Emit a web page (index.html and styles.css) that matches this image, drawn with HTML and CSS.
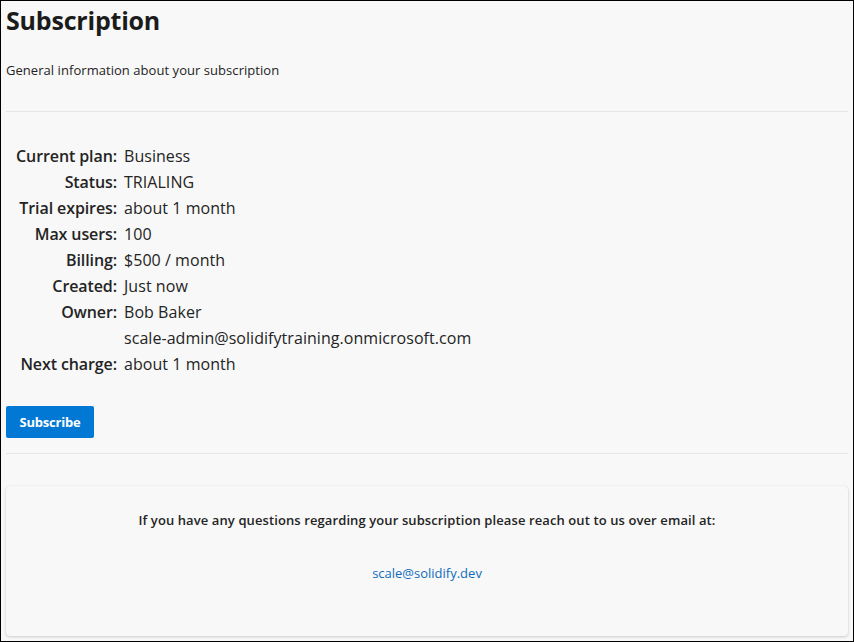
FILE: index.html
```html
<!DOCTYPE html>
<html>
<head>
<meta charset="utf-8">
<link rel="stylesheet" href="styles.css">
</head>
<body>
<div class="frame">
  <header class="head">
    <h1 class="title">Subscription</h1>
    <p class="subtitle">General information about your subscription</p>
  </header>
  <hr class="rule rule-top">
  <dl class="details">
    <dt>Current plan:</dt><dd>Business</dd>
    <dt>Status:</dt><dd>TRIALING</dd>
    <dt>Trial expires:</dt><dd>about 1 month</dd>
    <dt>Max users:</dt><dd>100</dd>
    <dt>Billing:</dt><dd>$500 / month</dd>
    <dt>Created:</dt><dd>Just now</dd>
    <dt>Owner:</dt><dd>Bob Baker</dd>
    <dt></dt><dd>scale-admin@solidifytraining.onmicrosoft.com</dd>
    <dt>Next charge:</dt><dd>about 1 month</dd>
  </dl>
  <button class="btn-primary" type="button">Subscribe</button>
  <hr class="rule rule-bottom">
  <section class="contact-card">
    <p class="contact-text">If you have any questions regarding your subscription please reach out to us over email at:</p>
    <a class="contact-link" href="#">scale@solidify.dev</a>
  </section>
</div>
</body>
</html>
```

FILE: styles.css
```css
html, body {
  margin: 0;
  padding: 0;
  background: #f8f8f8;
}
body {
  font-family: "Open Sans", "Noto Sans", "Liberation Sans", sans-serif;
  color: #242424;
}
.frame {
  box-sizing: border-box;
  width: 854px;
  height: 642px;
  border: 1px solid #000;
  padding: 0 5px;
  background: #f8f8f8;
  overflow: hidden;
}
.head {
  padding-top: 3px;
}
.title {
  margin: 0;
  font-size: 25px;
  line-height: 32px;
  font-weight: 700;
  color: #1b1b1b;
  letter-spacing: -0.2px;
}
.subtitle {
  margin: 25px 0 0 0;
  font-size: 13px;
  line-height: 18px;
  color: #242424;
  letter-spacing: 0.05px;
}
.rule {
  border: 0;
  border-top: 1px solid #e6e6e6;
  margin: 0;
}
.rule-top {
  margin-top: 32px;
}
.details {
  display: grid;
  grid-template-columns: 111px auto;
  column-gap: 7px;
  margin: 31px 0 0 0;
  font-size: 16px;
  line-height: 26px;
}
.details dt {
  text-align: right;
  font-weight: 600;
  color: #242424;
  letter-spacing: -0.1px;
}
.details dd {
  margin: 0;
  color: #242424;
  letter-spacing: 0.05px;
}
.btn-primary {
  display: block;
  margin-top: 29px;
  width: 88px;
  height: 32px;
  border: 0;
  border-radius: 2px;
  background: #0078d4;
  color: #fff;
  font-family: inherit;
  font-size: 13px;
  font-weight: 700;
  padding: 0;
  letter-spacing: -0.2px;
}
.rule-bottom {
  margin-top: 15px;
}
.contact-card {
  margin-top: 32px;
  height: 150px;
  box-sizing: border-box;
  border-radius: 4px;
  background: #f8f8f8;
  box-shadow: 0 1px 3px rgba(0,0,0,0.18), 0 0 1px rgba(0,0,0,0.1);
  text-align: center;
  padding-top: 25px;
}
.contact-text {
  margin: 0;
  font-size: 13px;
  line-height: 18px;
  font-weight: 600;
  color: #242424;
  letter-spacing: 0.1px;
}
.contact-link {
  display: inline-block;
  margin-top: 35px;
  font-size: 13px;
  line-height: 18px;
  color: #0f6cbd;
  text-decoration: none;
  font-weight: 500;
}
```
